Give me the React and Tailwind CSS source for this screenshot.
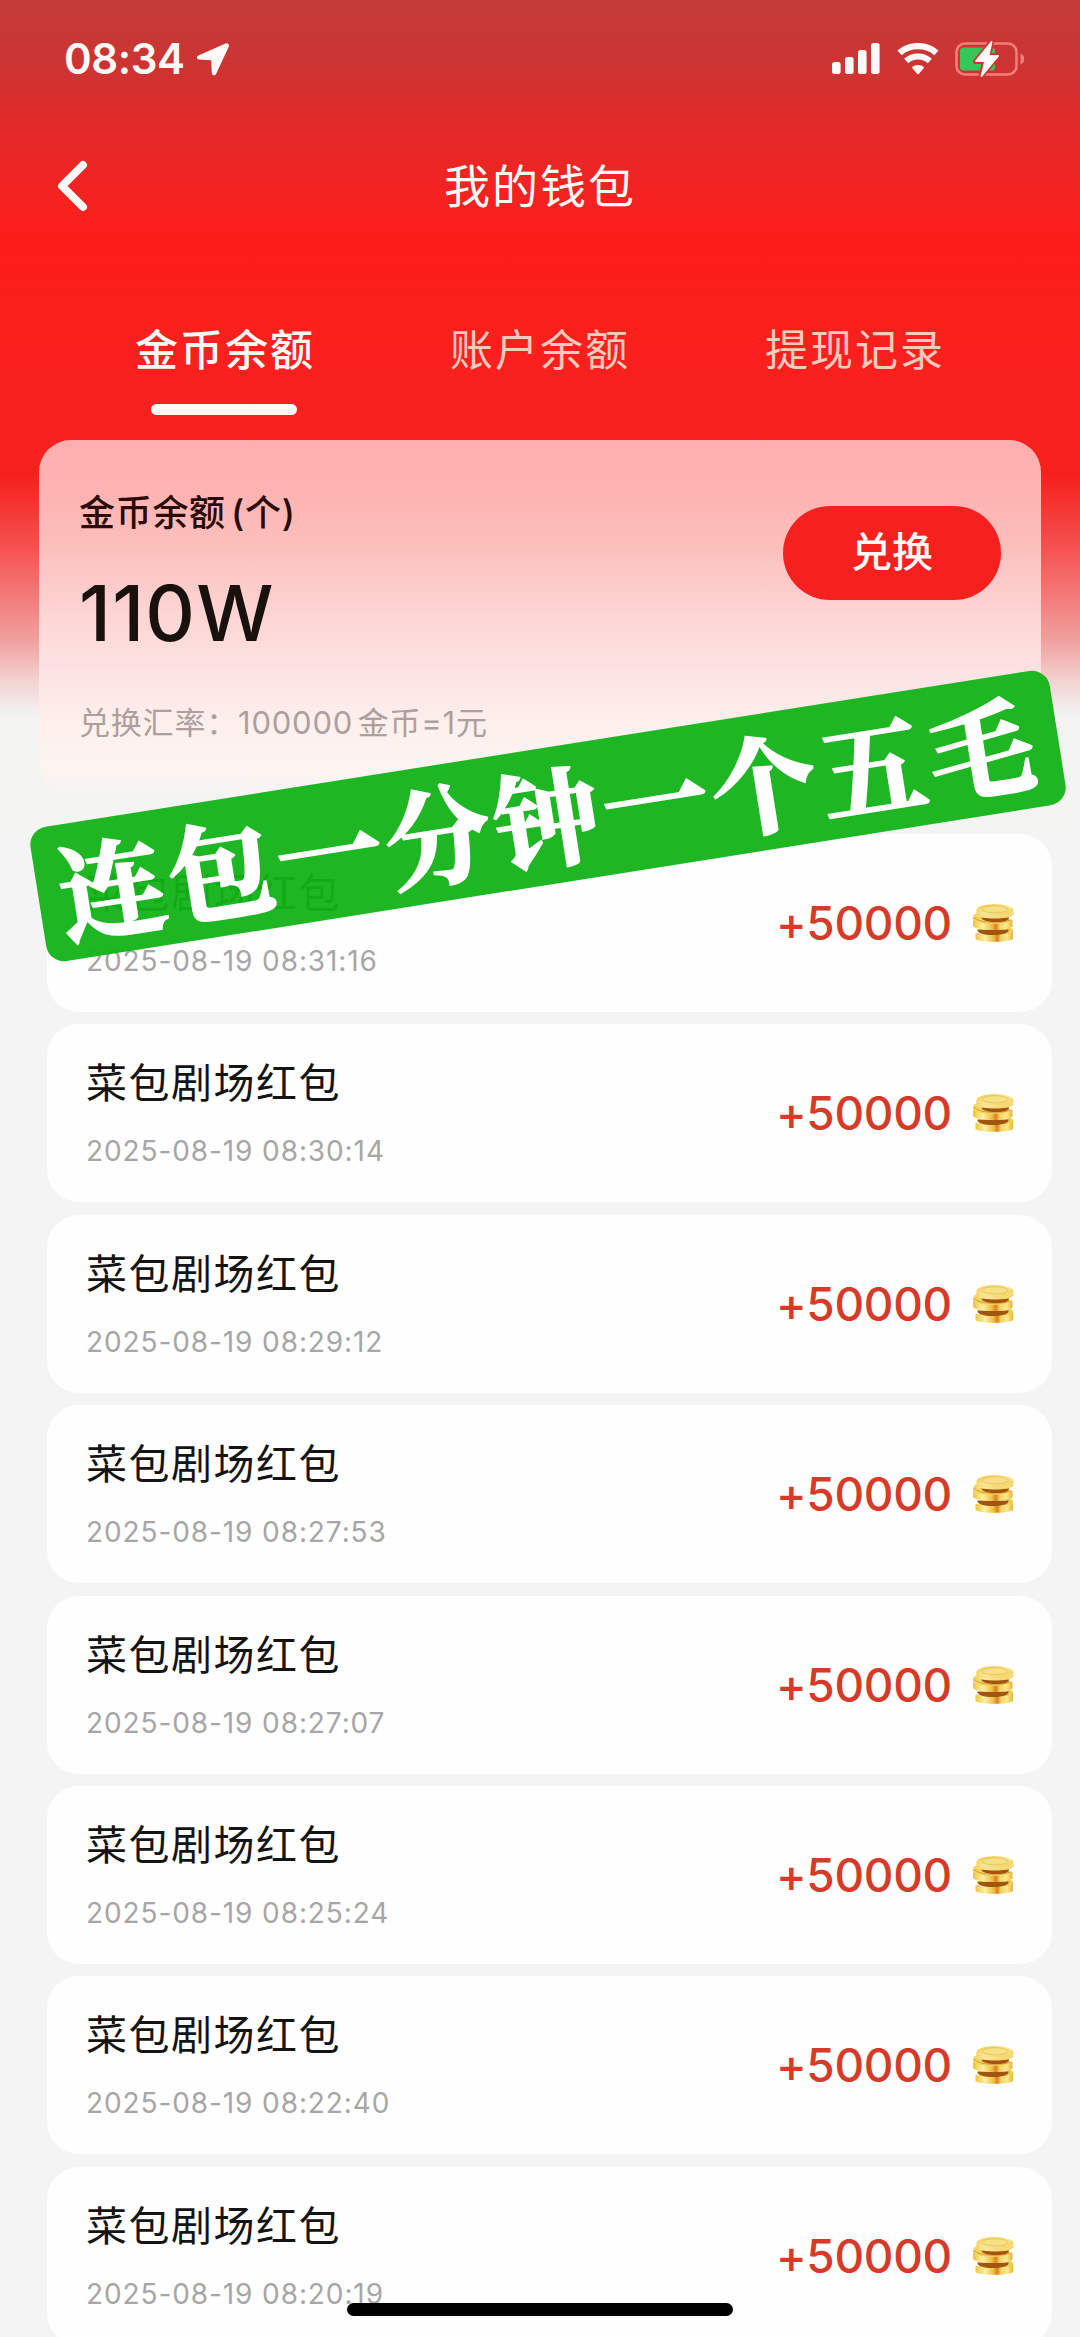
import { useState } from 'react';

const TABS = ['金币余额', '账户余额', '提现记录'];

const RECORDS = [
  { id: 1, title: '菜包剧场红包', time: '2025-08-19 08:31:16', amount: '+50000' },
  { id: 2, title: '菜包剧场红包', time: '2025-08-19 08:30:14', amount: '+50000' },
  { id: 3, title: '菜包剧场红包', time: '2025-08-19 08:29:12', amount: '+50000' },
  { id: 4, title: '菜包剧场红包', time: '2025-08-19 08:27:53', amount: '+50000' },
  { id: 5, title: '菜包剧场红包', time: '2025-08-19 08:27:07', amount: '+50000' },
  { id: 6, title: '菜包剧场红包', time: '2025-08-19 08:25:24', amount: '+50000' },
  { id: 7, title: '菜包剧场红包', time: '2025-08-19 08:22:40', amount: '+50000' },
  { id: 8, title: '菜包剧场红包', time: '2025-08-19 08:20:19', amount: '+50000' },
];

const LocationIcon = () => (
  <svg width="34" height="34" viewBox="0 0 34 34" fill="#fffaf7">
    <path d="M29.5 1.600 2.400 13.400c-2.400 1.100-2 4 .6 4.200l12.200.6.6 12.800c.2 2.700 3.300 3.100 4.400.7L32.600 5c1.100-2.300-.7-4.400-3.100-3.400Z" />
  </svg>
);

const SignalIcon = () => (
  <svg width="48" height="32" viewBox="0 0 48 32" fill="#fffaf7">
    <rect x="0" y="19" width="8.600" height="12" rx="2.500" />
    <rect x="13" y="14" width="8.600" height="17" rx="2.500" />
    <rect x="26" y="7" width="8.600" height="24" rx="2.500" />
    <rect x="39" y="0" width="8.600" height="31" rx="2.500" />
  </svg>
);

const WifiIcon = () => (
  <svg width="42" height="32" viewBox="0 0 42 32" fill="none">
    <path d="M2.600 9.800C12.800.9 29.200.9 39.400 9.800" stroke="#fffaf7" strokeWidth="6.400" />
    <path d="M9.200 18c6.700-6 16.900-6 23.600 0" stroke="#fffaf7" strokeWidth="6.200" />
    <path d="M14.800 24.400c3.700-3.100 8.700-3.100 12.400 0L22.200 30.600c-.7.8-1.700.8-2.400 0Z" fill="#fffaf7" />
  </svg>
);

const BatteryIcon = () => (
  <svg width="70" height="36" viewBox="0 0 70 36" fill="none">
    <rect x="1.500" y="2.500" width="60" height="31" rx="8.500" stroke="#f27e78" strokeWidth="2.600" />
    <path d="M65.500 12.500c3 1.200 3.600 3.200 3.600 5.500s-.6 4.300-3.600 5.500Z" fill="#f27e78" />
    <rect x="5" y="6.500" width="35" height="23" rx="3.500" fill="#36c759" />
    <path d="M36.500.5 20.500 20.500h9L26 35.500 43 14.800h-9.200Z" fill="#fffaf7" stroke="#cd3331" strokeWidth="5" strokeLinejoin="round" />
    <path d="M36.500 1 21 20h9.200L26.500 35 43 15h-9.500Z" fill="#fffaf7" stroke="#fffaf7" strokeWidth="1.800" strokeLinejoin="round" />
  </svg>
);

const BackIcon = () => (
  <svg width="32" height="52" viewBox="0 0 32 52" fill="none">
    <path d="M27 5 6 26 27 47" stroke="#fffaf7" strokeWidth="8" strokeLinecap="round" strokeLinejoin="round" />
  </svg>
);

const CoinIcon = () => (
  <svg width="42" height="40" viewBox="0 0 42 40">
    <defs>
      <linearGradient id="coinSide" x1="0" x2="1" y1="0" y2="0">
        <stop offset="0" stopColor="#eec63f" />
        <stop offset="0.250" stopColor="#fdf0a0" />
        <stop offset="0.480" stopColor="#efbf45" />
        <stop offset="0.580" stopColor="#dd7d22" />
        <stop offset="0.680" stopColor="#f5d566" />
        <stop offset="0.850" stopColor="#fae78c" />
        <stop offset="1" stopColor="#e6b53a" />
      </linearGradient>
      <linearGradient id="coinTop" x1="0" x2="1" y1="0" y2="1">
        <stop offset="0" stopColor="#f0c843" />
        <stop offset="0.500" stopColor="#f9e69a" />
        <stop offset="1" stopColor="#f0cc50" />
      </linearGradient>
    </defs>
    {/* bottom */}
    <path d="M3.500 30v6c4 3.800 33 3.800 37.500 0v-9Z" fill="url(#coinSide)" />
    <path d="M34 25c5-.8 7 .5 7 2.500s-3 3.500-7 3.500Z" fill="#f0cd55" />
    <path d="M5.500 26.500h31c1 3-5 5.500-15 5.500S4.500 30 5.500 26.500Z" fill="#a0560f" />
    {/* middle */}
    <path d="M1 16.500v6.500c3 5.300 35 5.300 39.500.5v-7Z" fill="url(#coinSide)" />
    <path d="M1 16c-.8-4 2-5.500 6-6l30 4v4.500C28 22 4 22 1 16Z" fill="#f3d560" />
    <path d="M2 14.500c5 5.500 27 6.500 36.500 2.500" stroke="#d39a30" strokeWidth="0.900" fill="none" />
    <path d="M9.500 14.500h27.500c.5 2.600-4 4.500-13 4.500S9.500 17 9.500 14.500Z" fill="#a3520f" />
    {/* top */}
    <path d="M4.500 7v4.500c3 5.400 34 5.400 37 0V7Z" fill="url(#coinTop)" />
    <ellipse cx="23" cy="7" rx="18.500" ry="6" fill="url(#coinTop)" />
    <ellipse cx="23" cy="6.300" rx="13" ry="3.600" fill="#f6df85" stroke="#e2bb48" strokeWidth="0.700" />
  </svg>
);

const StatusBar = () => (
  <div className="flex h-[118px] items-center justify-between pl-[64px] pr-[55px]">
    <div className="flex items-center gap-[11px]">
      <span className="text-[42px] font-semibold leading-none tracking-[-0.4px]">08:34</span>
      <LocationIcon />
    </div>
    <div className="flex items-center">
      <SignalIcon />
      <div className="ml-[17px]"><WifiIcon /></div>
      <div className="ml-[16px]"><BatteryIcon /></div>
    </div>
  </div>
);

const RecordRow = ({ record }) => (
  <div className="flex h-[178px] shrink-0 items-center justify-between rounded-[32px] bg-[#fefefe] pl-[39px] pr-[38px]">
    <div className="flex flex-col">
      <span className="text-[41px] leading-[52px] tracking-[1.5px] text-[#141414]">{record.title}</span>
      <span className="mt-[24px] text-[28px] leading-[36px] tracking-[0.9px] text-[#a6a6a6]">{record.time}</span>
    </div>
    <div className="flex items-center gap-[20px]">
      <span className="text-[46px] font-medium leading-none tracking-[-0.3px] text-[#d63b2a]">{record.amount}</span>
      <CoinIcon />
    </div>
  </div>
);

const App = () => {
  const [activeTab, setActiveTab] = useState(0);

  return (
    <div className="relative h-[2337px] w-[1080px] overflow-hidden whitespace-nowrap bg-[#f4f4f4] font-['Inter','Noto_Sans_CJK_SC',sans-serif]">
      {/* Header */}
      <div className="h-[834px] bg-[linear-gradient(to_bottom,#c33b39_0px,#cb3533_60px,#de2b2a_115px,#f02423_180px,#fe1c1a_245px,#fa1f1b_300px,#f8211f_430px,#f6201c_475px,#f55352_550px,#f0a09d_640px,#f2d4d2_682px,#f3f3f2_715px,#f4f4f3_834px)]">
        <div className="text-[#fffaf7]">
          <StatusBar />
          <div className="grid h-[136px] grid-cols-3 items-center">
            <button className="pl-[56px]"><BackIcon /></button>
            <h1 className="text-center text-[46px] leading-none tracking-[2px]">我的钱包</h1>
          </div>
          <div className="flex h-[186px] justify-center pt-[68px]">
            {TABS.map((tab, i) => (
              <button
                key={tab}
                onClick={() => setActiveTab(i)}
                className={`flex w-[315px] flex-col items-center text-[43px] leading-[56px] tracking-[2px] ${
                  activeTab === i ? 'font-medium' : 'text-[#ffc9bd]'
                }`}
              >
                <span>{tab}</span>
                {activeTab === i && <span className="mt-[26px] mr-[2px] h-[11px] w-[146px] rounded-full bg-[#fffaf7]" />}
              </button>
            ))}
          </div>
        </div>

        {/* Balance card */}
        <div className="ml-[39px] flex h-[353px] w-[1002px] justify-between rounded-[32px] bg-[linear-gradient(to_bottom,#ffafaf_0%,#ffb3b2_15%,#fbbfbc_30%,#fdd3d2_48%,#fde3e3_66%,#fdefec_80%,#fdf4f1_92%,#f7f4f2_100%)] pl-[40px] pr-[40px]">
          <div className="flex flex-col pt-[49px]">
            <span className="text-[36px] font-medium leading-[48px] tracking-[0.7px] [word-spacing:-5px] text-[#2b0b08]">
              金币余额 (个)
            </span>
            <span className="mt-[31px] text-[77px] font-medium leading-[90px] tracking-[1.2px] text-[#19110d]">110W</span>
            <span className="mt-[45px] text-[31px] leading-[40px] tracking-[0.8px] [word-spacing:-5px] text-[#ad9f9d]">
              兑换汇率：100000 金币=1元
            </span>
          </div>
          <button className="mt-[66px] h-[94px] w-[218px] rounded-full bg-[#f6201f] text-[41px] font-medium text-[#fffaf7]">
            兑换
          </button>
        </div>
      </div>

      {/* Records */}
      <div className="ml-[47px] flex w-[1005px] flex-col gap-[12.4px]">
        {RECORDS.map((record) => (
          <RecordRow key={record.id} record={record} />
        ))}
      </div>

      {/* Promo sticker */}
      <div className="absolute left-[32px] top-[748px] flex h-[136px] w-[1032px] -rotate-9 items-center justify-center rounded-[18px] bg-[#12b317]/95 pb-[6px] font-['Noto_Serif_CJK_SC','Noto_Sans_CJK_SC',serif] text-[106px] font-bold leading-none tracking-[4px] text-white [-webkit-text-stroke:2.5px_white]">
        连包一分钟一个五毛
      </div>

      {/* Home indicator */}
      <div className="absolute left-[347px] top-[2303px] h-[13px] w-[386px] rounded-full bg-black" />
    </div>
  );
};

export default App;
